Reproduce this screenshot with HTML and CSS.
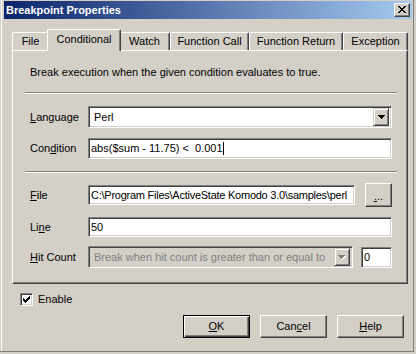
FILE: index.html
```html
<!DOCTYPE html>
<html lang="en">
<head>
	<meta charset="UTF-8">
	<title>Breakpoint Properties</title>
	<link rel="stylesheet" href="styles.css">
</head>
<body>
	<div class="window">
		<div class="titlebar">
			<span class="title">Breakpoint Properties</span>
			<span class="close-btn">
				<svg width="8" height="7" viewBox="0 0 8 7" shape-rendering="crispEdges">
					<rect x="0" y="0" width="2" height="1"/><rect x="6" y="0" width="2" height="1"/>
					<rect x="1" y="1" width="2" height="1"/><rect x="5" y="1" width="2" height="1"/>
					<rect x="2" y="2" width="4" height="1"/>
					<rect x="3" y="3" width="2" height="1"/>
					<rect x="2" y="4" width="4" height="1"/>
					<rect x="1" y="5" width="2" height="1"/><rect x="5" y="5" width="2" height="1"/>
					<rect x="0" y="6" width="2" height="1"/><rect x="6" y="6" width="2" height="1"/>
				</svg>
			</span>
		</div>

		<div class="dialog">
			<div class="tabs">
				<div class="tab tab-file">File</div>
				<div class="tab tab-cond active">Conditional</div>
				<div class="tab tab-watch">Watch</div>
				<div class="tab tab-call">Function Call</div>
				<div class="tab tab-return">Function Return</div>
				<div class="tab tab-exc">Exception</div>
			</div>

			<div class="panel">
				<p class="desc">Break execution when the given condition evaluates to true.</p>
				<div class="sep"></div>

				<div class="row row-lang">
					<span class="lbl"><u>L</u>anguage</span>
					<div class="combo">
						<span class="combo-text">Perl</span>
						<span class="drop-btn">
							<svg width="7" height="4" viewBox="0 0 7 4" shape-rendering="crispEdges">
								<rect x="0" y="0" width="7" height="1"/><rect x="1" y="1" width="5" height="1"/>
								<rect x="2" y="2" width="3" height="1"/><rect x="3" y="3" width="1" height="1"/>
							</svg>
						</span>
					</div>
				</div>

				<div class="row row-cond">
					<span class="lbl">Con<u>d</u>ition</span>
					<div class="field"><span class="field-text">abs($sum - 11.75) &lt;  0.001</span><span class="caret"></span></div>
				</div>

				<div class="sep"></div>

				<div class="row row-file">
					<span class="lbl"><u>F</u>ile</span>
					<div class="field"><span class="field-text path">C:\Program Files\ActiveState Komodo 3.0\samples\perl</span></div>
					<span class="btn btn-browse"><u>.</u>..</span>
				</div>

				<div class="row row-line">
					<span class="lbl">Li<u>n</u>e</span>
					<div class="field"><span class="field-text">50</span></div>
				</div>

				<div class="row row-hit">
					<span class="lbl"><u>H</u>it Count</span>
					<div class="combo disabled">
						<span class="combo-text">Break when hit count is greater than or equal to</span>
						<span class="drop-btn">
							<svg width="8" height="5" viewBox="0 0 8 5" shape-rendering="crispEdges">
								<g fill="#fff">
									<rect x="1" y="1" width="7" height="1"/><rect x="2" y="2" width="5" height="1"/>
									<rect x="3" y="3" width="3" height="1"/><rect x="4" y="4" width="1" height="1"/>
								</g>
								<g fill="#808080">
									<rect x="0" y="0" width="7" height="1"/><rect x="1" y="1" width="5" height="1"/>
									<rect x="2" y="2" width="3" height="1"/><rect x="3" y="3" width="1" height="1"/>
								</g>
							</svg>
						</span>
					</div>
					<div class="field field-count"><span class="field-text">0</span></div>
				</div>
			</div>

			<div class="enable-row">
				<span class="checkbox">
					<svg width="7" height="7" viewBox="0 0 7 7" shape-rendering="crispEdges">
						<rect x="6" y="0" width="1" height="1"/>
						<rect x="5" y="1" width="2" height="1"/>
						<rect x="0" y="2" width="1" height="1"/><rect x="4" y="2" width="3" height="1"/>
						<rect x="0" y="3" width="2" height="1"/><rect x="3" y="3" width="3" height="1"/>
						<rect x="0" y="4" width="5" height="1"/>
						<rect x="1" y="5" width="3" height="1"/>
						<rect x="2" y="6" width="1" height="1"/>
					</svg>
				</span>
				<span>Enable</span>
			</div>

			<div class="buttons">
				<span class="btn btn-default"><u>O</u>K</span>
				<span class="btn">Can<u>c</u>el</span>
				<span class="btn"><u>H</u>elp</span>
			</div>
		</div>
	</div>
</body>
</html>
```

FILE: styles.css
```css
body {
	margin: 0;
	background-color: #d4d0c8;
	font-family: "Liberation Sans", Tahoma, Arial, sans-serif;
	font-size: 11px;
	line-height: 13px;
	color: #000;
}
u {
	text-decoration: underline;
	text-underline-offset: 1px;
}

/* window frame */
.window {
	width: 414px;
	height: 352px;
	box-sizing: border-box;
	padding: 1px 1px 0 4px;
	border-right: 1px solid #808080;
	border-bottom: 1px solid #808080;
	box-shadow: inset 1px 0 0 #d4d0c8, inset 2px 0 0 #fff;
}
.titlebar {
	height: 18px;
	display: flex;
	align-items: center;
	justify-content: space-between;
	padding: 0 2px;
	background: linear-gradient(to right, #0a246a, #a6caf0);
	color: #fff;
	font-weight: bold;
}
.close-btn {
	width: 16px;
	height: 14px;
	box-sizing: border-box;
	display: flex;
	align-items: center;
	justify-content: center;
	background-color: #d4d0c8;
	border: 1px solid;
	border-color: #fff #404040 #404040 #fff;
	box-shadow: inset -1px -1px 0 #808080;
	padding: 0 1px 1px 0;
}

.dialog {
	padding: 10px 4px 0 8px;
}

/* tabs */
.tabs {
	display: flex;
	align-items: flex-end;
	height: 22px;
}
.tab {
	height: 18px;
	margin-bottom: 1px;
	box-sizing: border-box;
	display: flex;
	align-items: center;
	justify-content: center;
	border: 1px solid;
	border-bottom: none;
	border-color: #fff #404040 #fff #fff;
	border-radius: 2px 2px 0 0;
	box-shadow: inset -1px 0 0 #808080;
	white-space: nowrap;
}
.tab-file { width: 37px; }
.tab-cond { width: 70px; }
.tab-watch { width: 51px; }
.tab-call { width: 79px; }
.tab-return { width: 94px; }
.tab-exc { width: 65px; }
.tab.active {
	width: 74px;
	height: 22px;
	margin: 0 -2px;
	padding-bottom: 3px;
	position: relative;
	z-index: 1;
	background-color: #d4d0c8;
}

/* panel */
.panel {
	margin-top: -1px;
	height: 234px;
	box-sizing: border-box;
	padding: 15px 15px 0 17px;
	border: 1px solid;
	border-color: #fff #404040 #404040 #fff;
	box-shadow: inset -1px -1px 0 #808080;
}
.desc {
	margin: 0;
}
.sep {
	margin: 13px -5px 0;
	border-top: 1px solid #808080;
	border-bottom: 1px solid #fff;
}
.row + .sep {
	margin-top: 12px;
}
.row {
	display: flex;
	align-items: center;
}
.lbl {
	width: 58px;
	flex: none;
	white-space: nowrap;
}
.row-lang { margin-top: 12px; height: 22px; }
.row-cond { margin-top: 10px; height: 21px; }
.row-file { margin-top: 10px; height: 24px; }
.row-line { margin-top: 10px; height: 20px; }
.row-hit { margin-top: 9px; height: 22px; }

/* sunken boxes */
.field,
.combo,
.checkbox {
	box-sizing: border-box;
	background-color: #fff;
	border: 1px solid;
	border-color: #808080 #fff #fff #808080;
	box-shadow: inset 1px 1px 0 #404040, inset -1px -1px 0 #d4d0c8;
}
.field {
	flex: 1;
	min-width: 0;
	height: 100%;
	display: flex;
	align-items: center;
	padding: 0 2px;
	overflow: hidden;
}
.row-file .field { height: 20px; }
.field-count {
	flex: none;
	width: 31px;
	height: 21px;
	margin-left: 8px;
}
.field-text {
	white-space: pre;
}
.path {
	letter-spacing: -0.25px;
}
.caret {
	width: 1px;
	height: 13px;
	background-color: #000;
	flex: none;
}
.combo {
	flex: 1;
	min-width: 0;
	height: 22px;
	display: flex;
	align-items: center;
	padding: 2px 2px 2px 5px;
}
.combo-text {
	flex: 1;
	white-space: nowrap;
	overflow: hidden;
}
.combo.disabled {
	background-color: #d4d0c8;
	color: #808080;
}
.drop-btn {
	width: 16px;
	height: 18px;
	flex: none;
	box-sizing: border-box;
	display: flex;
	align-items: center;
	justify-content: center;
	background-color: #d4d0c8;
	border: 1px solid;
	border-color: #d4d0c8 #404040 #404040 #d4d0c8;
	box-shadow: inset 1px 1px 0 #fff, inset -1px -1px 0 #808080;
}

/* raised buttons */
.btn {
	box-sizing: border-box;
	display: flex;
	align-items: center;
	justify-content: center;
	width: 67px;
	height: 23px;
	border: 1px solid;
	border-color: #fff #404040 #404040 #fff;
	box-shadow: inset -1px -1px 0 #808080;
}
.btn-default {
	border-color: #000;
	box-shadow: inset 1px 1px 0 #fff, inset -1px -1px 0 #404040, inset -2px -2px 0 #808080;
}
.btn-browse {
	width: 27px;
	height: 24px;
	flex: none;
	margin-left: 10px;
	padding-top: 3px;
}

/* bottom area */
.enable-row {
	display: flex;
	align-items: center;
	gap: 5px;
	margin: 9px 0 0 8px;
	height: 13px;
}
.checkbox {
	width: 13px;
	height: 13px;
	display: flex;
	align-items: center;
	justify-content: center;
}
.buttons {
	display: flex;
	justify-content: flex-end;
	gap: 10px;
	margin-top: 9px;
	padding-right: 4px;
}
```
